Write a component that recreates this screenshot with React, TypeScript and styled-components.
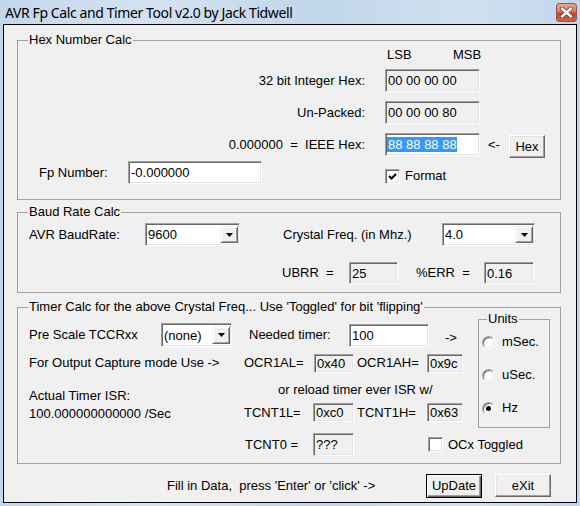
import React from 'react';
import styled, { createGlobalStyle } from 'styled-components';

const GlobalStyle = createGlobalStyle`
  html, body {
    margin: 0;
    padding: 0;
    background: #c4d9ee;
  }
  body {
    font-family: "Liberation Sans", Arial, sans-serif;
    font-size: 13px;
    color: #000;
  }
`;

const Window = styled.div`
  width: 580px;
  height: 506px;
  box-sizing: border-box;
  padding: 0 3px 3px;
  display: flex;
  flex-direction: column;
  background: linear-gradient(to right, #c3d7ec 0%, #d3e2f1 25%, #c1d6eb 55%, #d0e0f0 80%, #c2d7ec 100%);
`;

const TitleBar = styled.div`
  height: 24px;
  flex: none;
  display: flex;
  align-items: center;
  justify-content: space-between;
  padding-left: 2px;
`;

const Title = styled.span`
  font-family: "Noto Sans", "Open Sans", sans-serif;
  font-size: 14px;
  letter-spacing: -0.4px;
  color: #000;
  white-space: nowrap;
`;

const CloseButton = styled.div`
  width: 21px;
  height: 19px;
  box-sizing: border-box;
  border: 1px solid #8b5a4c;
  border-radius: 3px;
  background: linear-gradient(to bottom, #eba48f 0%, #dc7a5f 45%, #c9452a 55%, #d06244 100%);
  display: flex;
  align-items: center;
  justify-content: center;
`;

const Client = styled.div`
  flex: 1;
  border: 1px solid #000;
  background: #f0f0f0;
  display: flex;
  flex-direction: column;
  padding: 15px 15px 0 13px;
`;

const Group = styled.div<{ $h: number; $mt?: number; $w?: number }>`
  position: relative;
  flex: none;
  box-sizing: border-box;
  height: ${p => p.$h}px;
  width: ${p => (p.$w ? `${p.$w}px` : 'auto')};
  margin-top: ${p => p.$mt ?? 0}px;
  border: 1px solid #a0a0a0;
`;

const Caption = styled.span<{ $left?: number }>`
  position: absolute;
  top: -9px;
  left: ${p => p.$left ?? 10}px;
  padding: 0 1px;
  line-height: 16px;
  background: #f0f0f0;
  white-space: pre;
`;

const GroupBody = styled.div<{ $pt: number }>`
  display: flex;
  flex-direction: column;
  padding-top: ${p => p.$pt}px;
`;

const Row = styled.div<{ $mt?: number; $h: number }>`
  display: flex;
  align-items: center;
  height: ${p => p.$h}px;
  margin-top: ${p => p.$mt ?? 0}px;
  flex: none;
`;

const Label = styled.span<{ $w?: number; $ml?: number; $mt?: number; $right?: boolean }>`
  flex: none;
  width: ${p => (p.$w ? `${p.$w}px` : 'auto')};
  margin-left: ${p => p.$ml ?? 0}px;
  margin-top: ${p => p.$mt ?? 0}px;
  text-align: ${p => (p.$right ? 'right' : 'left')};
  line-height: 16px;
  white-space: pre;
`;

const Field = styled.div<{ $w: number; $h?: number; $white?: boolean; $ml?: number }>`
  flex: none;
  box-sizing: border-box;
  width: ${p => p.$w}px;
  height: ${p => p.$h ?? 23}px;
  margin-left: ${p => p.$ml ?? 0}px;
  border: 1px solid;
  border-color: #a0a0a0 #fff #fff #a0a0a0;
  box-shadow: inset 1px 1px 0 #696969, inset -1px -1px 0 #e3e3e3;
  background: ${p => (p.$white ? '#fff' : '#f0f0f0')};
  padding: 0 2px;
  display: flex;
  align-items: center;
  white-space: pre;
`;

const Selected = styled.span`
  margin-left: -1px;
  padding: 0 0 0 1px;
  background: #3399ff;
  color: #fff;
  line-height: 15px;
`;

const ComboField = styled(Field)`
  justify-content: space-between;
  padding: 0 2px 0 2px;
`;

const DropButton = styled.span`
  flex: none;
  box-sizing: border-box;
  width: 18px;
  height: calc(100% - 4px);
  border: 1px solid;
  border-color: #f0f0f0 #696969 #696969 #f0f0f0;
  box-shadow: inset 1px 1px 0 #fff, inset -1px -1px 0 #a0a0a0;
  background: #f0f0f0;
  display: flex;
  align-items: center;
  justify-content: center;
  margin-right: -1px;
`;

const Button = styled.div<{ $w: number; $h?: number; $mt?: number; $default?: boolean }>`
  flex: none;
  box-sizing: border-box;
  width: ${p => p.$w}px;
  height: ${p => p.$h ?? 23}px;
  margin-top: ${p => p.$mt ?? 0}px;
  align-self: ${p => (p.$mt ? 'flex-start' : 'auto')};
  background: #f0f0f0;
  border: 1px solid;
  border-color: ${p => (p.$default ? '#000' : '#fff #696969 #696969 #fff')};
  box-shadow: ${p =>
    p.$default
      ? 'inset 1px 1px 0 #fff, inset -1px -1px 0 #696969, inset -2px -2px 0 #a0a0a0'
      : 'inset -1px -1px 0 #a0a0a0, inset 1px 1px 0 #e3e3e3'};
  display: flex;
  align-items: center;
  justify-content: center;
  line-height: 16px;
`;

const CheckItem = styled.div<{ $ml?: number; $bottom?: boolean }>`
  flex: none;
  display: flex;
  align-items: center;
  gap: 5px;
  margin-left: ${p => p.$ml ?? 0}px;
  align-self: ${p => (p.$bottom ? 'flex-end' : 'center')};
  line-height: 16px;
  white-space: nowrap;
`;

const CheckBox = styled.span`
  flex: none;
  box-sizing: border-box;
  width: 15px;
  height: 15px;
  border: 1px solid;
  border-color: #a0a0a0 #fff #fff #a0a0a0;
  box-shadow: inset 1px 1px 0 #696969, inset -1px -1px 0 #e3e3e3;
  background: #fff;
  display: flex;
  align-items: center;
  justify-content: center;
`;

const TimerBody = styled.div`
  display: flex;
`;

const TimerMain = styled.div`
  flex: none;
  width: 449px;
  display: flex;
  flex-direction: column;
  padding-left: 11px;
`;

const SplitRow = styled.div`
  display: flex;
  height: 49px;
  flex: none;
`;

const TextStack = styled.div`
  width: 215px;
  flex: none;
  padding-top: 14px;
  line-height: 18px;
  white-space: pre;
`;

const Column = styled.div`
  display: flex;
  flex-direction: column;
`;

const UnitsBox = styled.div`
  flex: none;
  margin: 11px 10px 0 0;
`;

const UnitsList = styled.div`
  display: flex;
  flex-direction: column;
  gap: 17px;
  padding: 14px 0 0 3px;
`;

const RadioItem = styled.div`
  display: flex;
  align-items: center;
  gap: 7px;
  height: 16px;
  line-height: 16px;
`;

const RadioDot = styled.span<{ $on?: boolean }>`
  flex: none;
  box-sizing: border-box;
  width: 13px;
  height: 13px;
  border-radius: 50%;
  border: 1px solid;
  border-color: #a0a0a0 #fff #fff #a0a0a0;
  box-shadow: inset 1px 1px 0 #696969, inset -1px -1px 0 #e3e3e3;
  background: #fff;
  display: flex;
  align-items: center;
  justify-content: center;
  &::after {
    content: '';
    display: ${p => (p.$on ? 'block' : 'none')};
    width: 5px;
    height: 5px;
    border-radius: 50%;
    background: #000;
  }
`;

const Footer = styled.div`
  display: flex;
  align-items: center;
  height: 24px;
  margin-top: 10px;
  flex: none;
`;

const FooterButtons = styled.div`
  display: flex;
  align-items: flex-start;
  gap: 13px;
  margin-left: auto;
  margin-right: 10px;
`;

function ComboBox({ w, h, value }: { w: number; h?: number; value: string }) {
  return (
    <ComboField $w={w} $h={h} $white>
      <span>{value}</span>
      <DropButton>
        <svg width="7" height="4" viewBox="0 0 7 4">
          <path d="M0 0h7L3.5 4z" fill="#000" />
        </svg>
      </DropButton>
    </ComboField>
  );
}

function Check({ checked }: { checked?: boolean }) {
  return (
    <CheckBox>
      {checked && (
        <svg width="9" height="9" viewBox="0 0 9 9">
          <path d="M1 4l2.5 2.5L8 2" stroke="#000" strokeWidth="2" fill="none" />
        </svg>
      )}
    </CheckBox>
  );
}

export default function App() {
  return (
    <>
      <GlobalStyle />
      <Window>
        <TitleBar>
          <Title>AVR Fp Calc and Timer Tool v2.0 by Jack Tidwell</Title>
          <CloseButton>
            <svg width="13" height="11" viewBox="0 0 13 11">
              <path d="M2 1.5l9 8M11 1.5l-9 8" stroke="#5a4a48" strokeWidth="4.2" strokeLinecap="round" />
              <path d="M2 1.5l9 8M11 1.5l-9 8" stroke="#fff" strokeWidth="2.4" strokeLinecap="round" />
            </svg>
          </CloseButton>
        </TitleBar>
        <Client>
          <Group $h={160}>
            <Caption>Hex Number Calc</Caption>
            <GroupBody $pt={6}>
              <Row $h={16}>
                <Label $ml={369} $w={66}>LSB</Label>
                <Label>MSB</Label>
              </Row>
              <Row $mt={6} $h={23}>
                <Label $w={347} $right>32 bit Integer Hex:</Label>
                <Field $w={95} $ml={20}>00 00 00 00</Field>
              </Row>
              <Row $mt={9} $h={23}>
                <Label $w={347} $right>Un-Packed:</Label>
                <Field $w={95} $ml={20}>00 00 00 80</Field>
              </Row>
              <Row $mt={9} $h={23}>
                <Label $w={347} $right>0.000000  =  IEEE Hex:</Label>
                <Field $w={95} $ml={20} $white>
                  <Selected>88 88 88 88</Selected>
                </Field>
                <Label $ml={8} $w={21}>&lt;-</Label>
                <Button $w={36} $mt={2}>Hex</Button>
              </Row>
              <Row $mt={5} $h={23}>
                <Label $ml={21} $w={89}>Fp Number:</Label>
                <Field $w={134} $white>-0.000000</Field>
                <CheckItem $ml={123} $bottom>
                  <Check checked />
                  <span>Format</span>
                </CheckItem>
              </Row>
            </GroupBody>
          </Group>

          <Group $h={81} $mt={12}>
            <Caption>Baud Rate Calc</Caption>
            <GroupBody $pt={10}>
              <Row $h={23}>
                <Label $ml={11} $w={116}>AVR BaudRate:</Label>
                <ComboBox w={95} value="9600" />
                <Label $ml={43} $w={159}>Crystal Freq. (in Mhz.)</Label>
                <ComboBox w={93} value="4.0" />
              </Row>
              <Row $mt={16} $h={22}>
                <Label $ml={264} $w={67}>UBRR  =</Label>
                <Field $w={49} $h={22}>25</Field>
                <Label $ml={18} $w={68}>%ERR  =</Label>
                <Field $w={50} $h={22}>0.16</Field>
              </Row>
            </GroupBody>
          </Group>

          <Group $h={157} $mt={14}>
            <Caption>Timer Calc for the above Crystal Freq... Use 'Toggled' for bit 'flipping'</Caption>
            <TimerBody>
              <TimerMain>
                <Row $mt={15} $h={24}>
                  <Label $w={132}>Pre Scale TCCRxx</Label>
                  <ComboBox w={71} h={24} value="(none)" />
                  <Label $ml={17} $w={100}>Needed timer:</Label>
                  <Field $w={80} $white>100</Field>
                  <Label $ml={16} $mt={5}>-&gt;</Label>
                </Row>
                <Row $mt={6} $h={20}>
                  <Label $w={215}>For Output Capture mode Use -&gt;</Label>
                  <Label $w={70}>OCR1AL=</Label>
                  <Field $w={40} $h={19}>0x40</Field>
                  <Label $ml={3} $w={70}>OCR1AH=</Label>
                  <Field $w={36} $h={19}>0x9c</Field>
                </Row>
                <SplitRow>
                  <TextStack>
                    <div>Actual Timer ISR:</div>
                    <div>100.000000000000 /Sec</div>
                  </TextStack>
                  <Column>
                    <Label $ml={34} $mt={9}>or reload timer ever ISR w/</Label>
                    <Row $mt={5} $h={19}>
                      <Label $w={69}>TCNT1L=</Label>
                      <Field $w={41} $h={19}>0xc0</Field>
                      <Label $ml={3} $w={70}>TCNT1H=</Label>
                      <Field $w={36} $h={19}>0x63</Field>
                    </Row>
                  </Column>
                </SplitRow>
                <Row $mt={11} $h={23}>
                  <Label $ml={216} $w={68}>TCNT0 =</Label>
                  <Field $w={41}>???</Field>
                  <CheckItem $ml={74}>
                    <Check />
                    <span>OCx Toggled</span>
                  </CheckItem>
                </Row>
              </TimerMain>
              <UnitsBox>
                <Group $h={109} $w={72}>
                  <Caption $left={8}>Units</Caption>
                  <UnitsList>
                    <RadioItem>
                      <RadioDot />
                      <span>mSec.</span>
                    </RadioItem>
                    <RadioItem>
                      <RadioDot />
                      <span>uSec.</span>
                    </RadioItem>
                    <RadioItem>
                      <RadioDot $on />
                      <span>Hz</span>
                    </RadioItem>
                  </UnitsList>
                </Group>
              </UnitsBox>
            </TimerBody>
          </Group>

          <Footer>
            <Label $ml={150}>Fill in Data,  press 'Enter' or 'click' -&gt;</Label>
            <FooterButtons>
              <Button $w={56} $h={24} $default>UpDate</Button>
              <Button $w={56} $h={23}>eXit</Button>
            </FooterButtons>
          </Footer>
        </Client>
      </Window>
    </>
  );
}
